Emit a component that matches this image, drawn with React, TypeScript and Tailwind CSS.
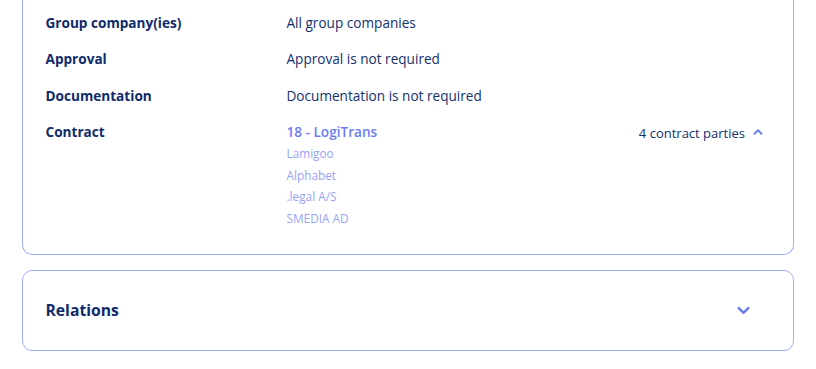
import { ChevronDown, ChevronUp } from "lucide-react"

type DetailRowProps = {
  label: string
  children: React.ReactNode
}

const DetailRow = ({ label, children }: DetailRowProps) => {
  return (
    <div className="flex flex-row">
      <div className="w-[241px] shrink-0 text-[13.6px] leading-[22px] font-bold text-[#0f2b6b]">
        {label}
      </div>
      <div className="flex-1 text-[13.6px] leading-[22px] text-[#13306e]">
        {children}
      </div>
    </div>
  )
}

const parties = ["Lamigoo", "Alphabet", ".legal A/S", "SMEDIA AD"]

export default function App() {
  return (
    <div
      className="w-[816px] h-[369px] overflow-hidden bg-white"
      style={{ fontFamily: '"Open Sans", sans-serif' }}
    >
      <div className="px-[22px] flex flex-col gap-[15px]">
        {/* details card, top cut off */}
        <div className="-mt-4 rounded-b-[10px] border-[1.5px] border-t-0 border-[#a3aefb] pl-[22.5px] pr-[28px] pt-[27.5px] pb-[25px]">
          <div className="flex flex-col gap-[14.5px]">
            <DetailRow label="Group company(ies)">All group companies</DetailRow>
            <DetailRow label="Approval">Approval is not required</DetailRow>
            <DetailRow label="Documentation">Documentation is not required</DetailRow>
            <DetailRow label="Contract">
              <div className="flex flex-row justify-between">
                <div className="flex flex-col">
                  <span className="font-semibold text-[#6c7df2]">18 - LogiTrans</span>
                  <div className="flex flex-col">
                    {parties.map((p) => (
                      <span key={p} className="text-[11.8px] leading-[21.5px] text-[#97a3f7]">
                        {p}
                      </span>
                    ))}
                  </div>
                </div>
                <button className="flex flex-row items-start gap-[6px] text-[13px] text-[#13306e] pt-[1px]">
                  4 contract parties
                  <ChevronUp className="size-[14px] mt-[3px] text-[#6c7df2]" strokeWidth={3.2} />
                </button>
              </div>
            </DetailRow>
          </div>
        </div>

        {/* relations card */}
        <div className="h-[81px] rounded-[10px] border-[1.5px] border-[#a3aefb] pl-[22.5px] pr-[40px] flex flex-row items-center justify-between">
          <h2 className="text-[15.7px] font-bold text-[#0f2b6b]">Relations</h2>
          <ChevronDown className="size-[19px] text-[#6c7df2]" strokeWidth={3.2} />
        </div>
      </div>
    </div>
  )
}
